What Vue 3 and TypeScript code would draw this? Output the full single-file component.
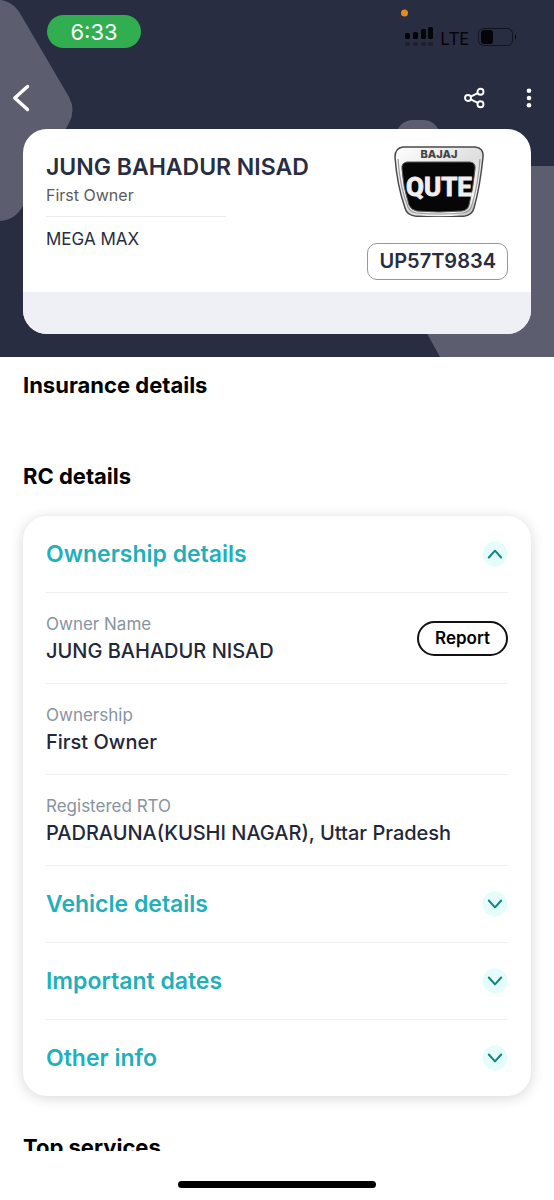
<script setup lang="ts">
import { ref } from 'vue'

interface Field {
  label: string
  value: string
  reportable?: boolean
}

interface Section {
  id: string
  title: string
  fields: Field[]
}

const owner = 'JUNG BAHADUR NISAD'

const sections: Section[] = [
  {
    id: 'ownership',
    title: 'Ownership details',
    fields: [
      { label: 'Owner Name', value: owner, reportable: true },
      { label: 'Ownership', value: 'First Owner' },
      { label: 'Registered RTO', value: 'PADRAUNA(KUSHI NAGAR), Uttar Pradesh' },
    ],
  },
  { id: 'vehicle', title: 'Vehicle details', fields: [] },
  { id: 'dates', title: 'Important dates', fields: [] },
  { id: 'other', title: 'Other info', fields: [] },
]

const openId = ref<string>('ownership')

function toggle(id: string): void {
  openId.value = openId.value === id ? '' : id
}
</script>

<template>
  <div class="page">
    <header class="hero">
      <svg class="shape shape-left" width="74" height="222" viewBox="0 0 74 222" aria-hidden="true">
        <path d="M0 0C9 1 16 6 21 15L69 97Q76 110 69 123L23 206Q15 220 0 221Z" fill="#5c5e6f" />
      </svg>
      <svg class="shape shape-right" width="160" height="237" viewBox="0 0 160 237" aria-hidden="true">
        <path d="M0 18Q5 0 19 0H29Q41 0 46 13L40 40H5Z" fill="#5c5e6f" />
        <path d="M160 46H60L0 180L13 177 46 237H160Z" fill="#5c5e6f" />
      </svg>

      <div class="status">
        <span class="time">6:33</span>
        <div class="signals">
          <svg width="112" height="42" viewBox="0 0 112 42" aria-hidden="true">
            <circle cx="2.500" cy="5" r="3.500" fill="#e58a1f" />
            <g fill="#050509">
              <rect x="3" y="25" width="5" height="6" rx="1.500" />
              <rect x="11" y="24" width="5" height="7" rx="1.500" />
              <rect x="19" y="21" width="5" height="10" rx="1.500" />
              <rect x="26" y="19" width="5" height="12" rx="1.500" />
              <g opacity=".3">
                <rect x="3" y="34" width="5" height="4" rx="1.500" />
                <rect x="11" y="34" width="5" height="4" rx="1.500" />
                <rect x="19" y="34" width="5" height="4" rx="1.500" />
                <rect x="26" y="34" width="5" height="4" rx="1.500" />
              </g>
              <text x="38" y="37" class="network">LTE</text>
              <rect x="79" y="22" width="12" height="14" rx="3" />
              <path d="M113 26q2 3 0 6z" />
            </g>
            <rect x="76.500" y="20.500" width="34" height="17" rx="5" fill="none" stroke="#11131f" stroke-width="1" />
          </svg>
        </div>
      </div>

      <nav class="toolbar">
        <button type="button" class="icon-button" aria-label="Back">
          <svg width="18" height="28" viewBox="0 0 18 28">
            <path d="M15.500 2.500L2.800 14L15.500 25.500" fill="none" stroke="#fff" stroke-width="3.400" stroke-linecap="round" stroke-linejoin="round" />
          </svg>
        </button>
        <span class="spacer"></span>
        <button type="button" class="icon-button" aria-label="Share">
          <svg width="22" height="22" viewBox="0 0 22 22" fill="none" stroke="#fff" stroke-width="1.900">
            <circle cx="4" cy="11" r="3" />
            <circle cx="16.500" cy="4.800" r="3" />
            <circle cx="16.500" cy="17.200" r="3" />
            <path d="M6.700 9.600L13.800 6.100M6.700 12.400L13.800 15.900" />
          </svg>
        </button>
        <button type="button" class="icon-button" aria-label="More options">
          <svg width="6" height="22" viewBox="0 0 6 22" fill="#fff">
            <circle cx="3" cy="3.700" r="2.300" />
            <circle cx="3" cy="11" r="2.300" />
            <circle cx="3" cy="18.300" r="2.300" />
          </svg>
        </button>
      </nav>

      <section class="summary">
        <div class="summary-main">
          <div class="summary-text">
            <h1>{{ owner }}</h1>
            <p class="rank">First Owner</p>
            <p class="model">MEGA MAX</p>
          </div>
          <div class="summary-side">
            <svg class="brand" width="92" height="72" viewBox="0 0 92 72" role="img" aria-label="Bajaj Qute">
              <defs>
                <linearGradient id="chrome" x1="0" y1="0" x2="1" y2="1">
                  <stop offset="0" stop-color="#ffffff" />
                  <stop offset=".55" stop-color="#dedede" />
                  <stop offset=".8" stop-color="#f7f7f7" />
                  <stop offset="1" stop-color="#8d8d8d" />
                </linearGradient>
              </defs>
              <path d="M11 2H83Q92 3 91 12Q88 42 82 63Q80 70 73 71Q46 73 23 71Q15 70 13 63Q5 40 3 12Q3 3 11 2Z" fill="url(#chrome)" stroke="#4a4a4a" stroke-width="1.500" />
              <path d="M6 14Q8 43 16 62Q18 67 24 68Q46 70 71 68Q78 67 80 60Q86 40 88 14" fill="none" stroke="#9b9b9b" stroke-width="1.200" />
              <path d="M15 17H78Q84 18 83 24Q81 45 77 60Q76 65 70 66Q46 68 25 66Q19 65 17 60Q11 42 10 24Q9 18 15 17Z" fill="#060606" stroke="#555" stroke-width="1" />
              <text x="47" y="13" text-anchor="middle" class="brand-small">BAJAJ</text>
              <text x="47" y="51" text-anchor="middle" class="brand-large">QUTE</text>
            </svg>
            <span class="plate">UP57T9834</span>
          </div>
        </div>
        <div class="summary-foot"></div>
      </section>
    </header>

    <main class="content">
      <h2 class="insurance">Insurance details</h2>
      <h2 class="rc">RC details</h2>

      <div class="details">
        <section v-for="section in sections" :key="section.id" class="section">
          <h3>
            <button type="button" class="section-head" :aria-expanded="openId === section.id" @click="toggle(section.id)">
              <span>{{ section.title }}</span>
              <svg class="chevron" :class="{ open: openId === section.id }" width="26" height="26" viewBox="0 0 26 26" aria-hidden="true">
                <circle cx="13" cy="13" r="12.500" fill="#e4fdfa" />
                <path d="M6.800 9.500L13 16.300L19.200 9.500" fill="none" stroke="#14837f" stroke-width="2" stroke-linecap="round" stroke-linejoin="round" />
              </svg>
            </button>
          </h3>
          <dl v-if="openId === section.id && section.fields.length">
            <div v-for="field in section.fields" :key="field.label" class="field">
              <div class="field-text">
                <dt>{{ field.label }}</dt>
                <dd>{{ field.value }}</dd>
              </div>
              <button v-if="field.reportable" type="button" class="report">Report</button>
            </div>
          </dl>
        </section>
      </div>

      <h2 class="services">Top services</h2>
    </main>

    <div class="home-bar"><span></span></div>
  </div>
</template>

<style>
body {
  margin: 0;
  background: #fff;
}
</style>

<style scoped>
.page {
  font-family: Inter, 'Liberation Sans', sans-serif;
  color: #000;
  background: #fff;
}

h1,
h2,
h3,
p,
dl,
dd {
  margin: 0;
}

button {
  font: inherit;
  background: none;
  border: 0;
  padding: 0;
  cursor: pointer;
}

svg {
  display: block;
}

.hero {
  position: relative;
  overflow: hidden;
  background: #282d41;
  padding-bottom: 23px;
}

.shape {
  position: absolute;
}

.shape-left {
  top: 0;
  left: 0;
}

.shape-right {
  right: 0;
  bottom: 0;
}

.status {
  position: relative;
  display: flex;
  justify-content: space-between;
  align-items: flex-start;
  height: 72px;
  padding: 0 40px 0 47px;
}

.time {
  margin-top: 15px;
  width: 94px;
  height: 33px;
  line-height: 34px;
  border-radius: 17px;
  background: #31ae50;
  color: #fff;
  font-size: 22px;
  text-align: center;
}

.signals {
  margin-top: 8px;
}

.signals svg {
  overflow: visible;
}

.network {
  font-family: 'Noto Sans', 'Liberation Sans', sans-serif;
  font-size: 18px;
}

.toolbar {
  position: relative;
  display: flex;
  align-items: center;
  gap: 40px;
  height: 52px;
  padding: 0 22px 0 12px;
}

.spacer {
  flex: 1;
}

.summary {
  position: relative;
  margin: 5px 23px 0;
  border-radius: 24px;
  overflow: hidden;
  background: #fff;
}

.summary-main {
  display: flex;
  justify-content: space-between;
  padding: 16px 23px 12px;
}

.summary-text {
  padding-top: 6px;
}

h1 {
  font-size: 23px;
  line-height: 32px;
  font-weight: 600;
  color: #282d41;
}

.rank {
  width: 180px;
  padding-bottom: 9px;
  border-bottom: 1px solid #ebebee;
  font-size: 16px;
  line-height: 24px;
  color: #5b5b60;
}

.model {
  margin-top: 10px;
  font-size: 17px;
  line-height: 24px;
  color: #282d41;
}

.summary-side {
  display: flex;
  flex-direction: column;
  align-items: flex-end;
}

.brand {
  margin-right: 24px;
}

.brand-small {
  font-family: Inter, sans-serif;
  font-size: 11px;
  font-weight: 800;
  fill: #444;
}

.brand-large {
  font-family: Roboto, 'Liberation Sans', sans-serif;
  font-size: 26px;
  font-weight: 700;
  fill: #efefef;
  stroke: #efefef;
  stroke-width: 1px;
}

.plate {
  margin-top: 26px;
  padding: 0 11px;
  border: 1px solid #96969c;
  border-radius: 10px;
  font-size: 20px;
  line-height: 35px;
  font-weight: 600;
  color: #282d41;
}

.summary-foot {
  height: 42px;
  background: #eff0f5;
}

h2 {
  font-size: 22px;
  line-height: 30px;
  font-weight: 700;
}

.content {
  padding: 13px 23px 40px;
}

.rc {
  margin-top: 61px;
}

.details {
  margin-top: 25px;
  padding: 0 23px;
  border-radius: 24px;
  background: #fff;
  box-shadow: 0 2px 14px rgba(0, 0, 0, 0.16);
}

h3 {
  font-size: 23px;
  font-weight: 600;
}

.section-head {
  display: flex;
  justify-content: space-between;
  align-items: center;
  width: 100%;
  height: 76px;
  color: #1fb0bb;
  text-align: left;
}

.section + .section {
  border-top: 1px solid #f0f0f2;
}

.chevron.open {
  transform: rotate(180deg);
}

.field {
  display: flex;
  justify-content: space-between;
  align-items: center;
  height: 90px;
  border-top: 1px solid #f0f0f2;
}

dt {
  font-size: 17px;
  line-height: 26px;
  color: #8793a2;
}

dd {
  font-size: 20px;
  line-height: 28px;
  font-weight: 500;
  color: #23273a;
}

.report {
  padding: 0 16px;
  border: 2px solid #111;
  border-radius: 18px;
  font-size: 17px;
  line-height: 31px;
  font-weight: 600;
  color: #000;
}

.services {
  margin-top: 36px;
}

.home-bar {
  position: fixed;
  left: 0;
  right: 0;
  bottom: 0;
  display: flex;
  justify-content: center;
  height: 49px;
  background: #fff;
}

.home-bar span {
  width: 198px;
  height: 7px;
  margin-top: 30px;
  border-radius: 4px;
  background: #000;
}
</style>
